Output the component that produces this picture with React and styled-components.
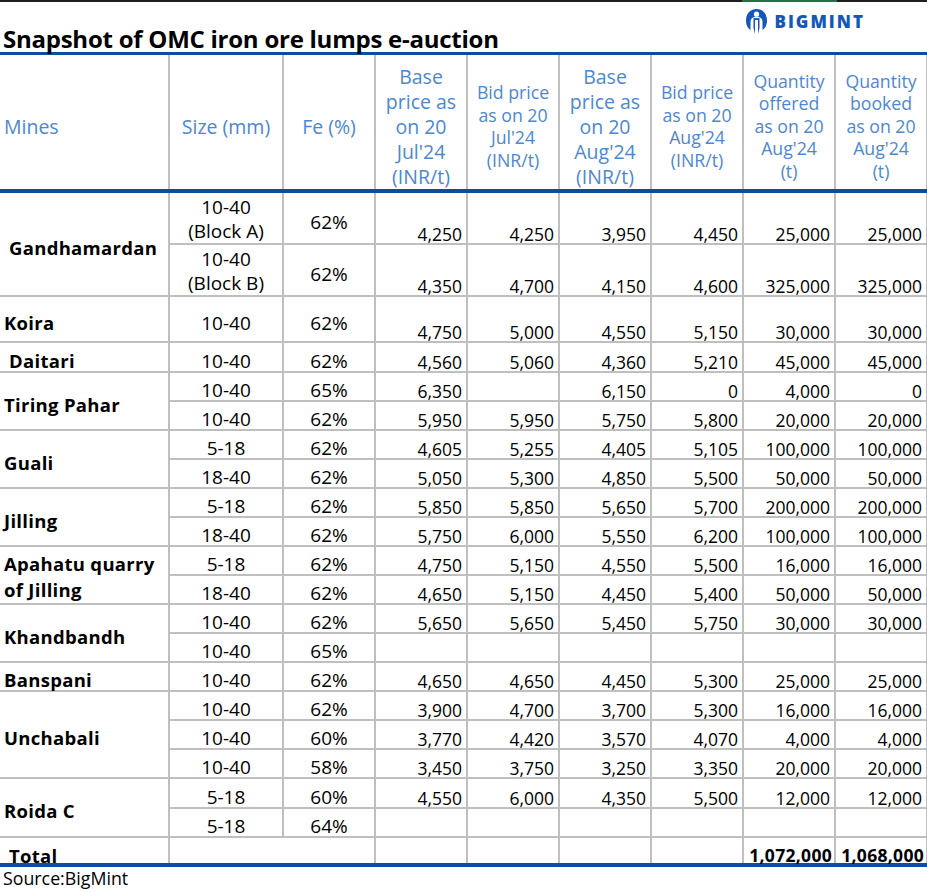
import React from 'react';
import styled, { createGlobalStyle } from 'styled-components';

const BLUE = '#0d4c9e';
const GRID = '#bfbfbf';
const HEAD = '#4d87d1';

const GlobalStyle = createGlobalStyle`
  html, body { margin: 0; padding: 0; background: #fff; }
  body { font-family: "Open Sans", "Noto Sans", sans-serif; color: #000; }
`;

const Page = styled.div`
  width: 927px;
`;

const TopRule = styled.div`
  height: 2px;
  background: linear-gradient(to right, #1f1f1f 0 742px, #217346 742px 837px, #1f1f1f 837px);
`;

const TitleBar = styled.div`
  height: 50px;
  display: flex;
  justify-content: space-between;
  align-items: flex-end;
  border-bottom: 3px solid ${BLUE};
  padding-left: 3px;
`;

const Title = styled.h1`
  margin: 0;
  font-size: 24px;
  font-weight: 700;
  line-height: 1;
  padding-bottom: 1px;
  letter-spacing: -0.25px;
`;

const Logo = styled.div`
  align-self: flex-start;
  margin-top: 6px;
  margin-right: 62px;
  display: flex;
  align-items: center;
  gap: 6px;
  color: #1557b7;
  font-weight: 800;
  font-size: 17px;
  letter-spacing: 2px;
`;

const Table = styled.table`
  width: 927px;
  border-collapse: collapse;
  table-layout: fixed;
`;

const HeadRow = styled.tr`
  height: 136px;
`;

const HeadCell = styled.th`
  font-weight: 400;
  color: ${HEAD};
  font-size: ${p => (p.$big ? '19.5px' : '17.7px')};
  line-height: ${p => (p.$big ? '25px' : '22.5px')};
  text-align: ${p => (p.$left ? 'left' : 'center')};
  vertical-align: middle;
  border: 2px solid ${GRID};
  border-top: none;
  border-bottom: 4px solid ${BLUE};
  padding: 8px ${p => (p.$left ? '4px' : '1px')} 0;
  white-space: nowrap;
  &:first-child { border-left: none; }
`;

const Row = styled.tr`
  height: ${p => p.$h}px;
`;

const Cell = styled.td`
  border: 2px solid ${GRID};
  font-size: 17.5px;
  line-height: 18px;
  padding: 0 4px;
  white-space: nowrap;
`;

const MineCell = styled(Cell)`
  border-left: none;
  font-weight: 700;
  font-size: 18.5px;
  letter-spacing: 0.3px;
  text-align: left;
  vertical-align: middle;
  white-space: normal;
  padding: ${p => (p.$multi ? 4 : 7)}px 0 0 ${p => (p.$indent ? '9px' : '4px')};
  line-height: ${p => (p.$multi ? 26 : 20)}px;
`;

const CenterCell = styled(Cell)`
  text-align: center;
  vertical-align: middle;
  font-size: 19px;
  line-height: ${p => (p.$multi ? 24 : 20)}px;
  padding-top: ${p => (p.$multi ? 2 : 7)}px;
`;

const NumCell = styled(Cell)`
  text-align: right;
  vertical-align: bottom;
  padding-bottom: 0;
`;

const TotalRow = styled.tr`
  height: 28px;
  & > td {
    border-bottom: 4px solid ${BLUE};
    vertical-align: bottom;
    line-height: 15px;
    padding-bottom: 0;
  }
`;

const TotalLabel = styled(Cell)`
  border-left: none;
  font-weight: 700;
  font-size: 18.5px;
  letter-spacing: 0.3px;
  padding-left: 9px;
  border-top-color: #d9d9d9;
`;

const TotalNum = styled(NumCell)`
  font-weight: 700;
  padding-right: 2px;
  letter-spacing: 0.3px;
`;

const Source = styled.div`
  font-size: 17.8px;
  padding: 0 0 0 3px;
  line-height: 22px;
`;

const LogoMark = () => (
  <svg width="23" height="27" viewBox="0 0 23 27" aria-hidden="true">
    <path
      d="M11.5 1 C5 1 1 6 1 12.5 C1 17 3 20.5 5.5 22 L5.5 14 C5.5 11 7 9.5 8.5 9.5 L8.5 20 L10 26 L10 12 L13 12 L13 26 L14.5 20 L14.5 9.5 C16 9.5 17.5 11 17.5 14 L17.5 22 C20 20.5 22 17 22 12.5 C22 6 18 1 11.5 1 Z"
      fill="#1557b7"
    />
    <circle cx="11.5" cy="6.2" r="2.6" fill="#fff" />
    <path d="M8.5 9.5 L14.5 9.5" stroke="#fff" strokeWidth="1.2" />
  </svg>
);

const ROWS = [
  { mine: 'Gandhamardan', indent: true, h: [52, 52], items: [
    { size: ['10-40', '(Block A)'], fe: '62%', v: ['4,250', '4,250', '3,950', '4,450', '25,000', '25,000'] },
    { size: ['10-40', '(Block B)'], fe: '62%', v: ['4,350', '4,700', '4,150', '4,600', '325,000', '325,000'] },
  ] },
  { mine: 'Koira', h: [46], items: [
    { size: ['10-40'], fe: '62%', v: ['4,750', '5,000', '4,550', '5,150', '30,000', '30,000'] },
  ] },
  { mine: 'Daitari', indent: true, h: [30], items: [
    { size: ['10-40'], fe: '62%', v: ['4,560', '5,060', '4,360', '5,210', '45,000', '45,000'] },
  ] },
  { mine: 'Tiring Pahar', h: [29, 29], items: [
    { size: ['10-40'], fe: '65%', v: ['6,350', '', '6,150', '0', '4,000', '0'] },
    { size: ['10-40'], fe: '62%', v: ['5,950', '5,950', '5,750', '5,800', '20,000', '20,000'] },
  ] },
  { mine: 'Guali', h: [29, 29], items: [
    { size: ['5-18'], fe: '62%', v: ['4,605', '5,255', '4,405', '5,105', '100,000', '100,000'] },
    { size: ['18-40'], fe: '62%', v: ['5,050', '5,300', '4,850', '5,500', '50,000', '50,000'] },
  ] },
  { mine: 'Jilling', h: [29, 29], items: [
    { size: ['5-18'], fe: '62%', v: ['5,850', '5,850', '5,650', '5,700', '200,000', '200,000'] },
    { size: ['18-40'], fe: '62%', v: ['5,750', '6,000', '5,550', '6,200', '100,000', '100,000'] },
  ] },
  { mine: 'Apahatu quarry of Jilling', lines: ['Apahatu quarry', 'of Jilling'], h: [29, 29], items: [
    { size: ['5-18'], fe: '62%', v: ['4,750', '5,150', '4,550', '5,500', '16,000', '16,000'] },
    { size: ['18-40'], fe: '62%', v: ['4,650', '5,150', '4,450', '5,400', '50,000', '50,000'] },
  ] },
  { mine: 'Khandbandh', h: [29, 29], items: [
    { size: ['10-40'], fe: '62%', v: ['5,650', '5,650', '5,450', '5,750', '30,000', '30,000'] },
    { size: ['10-40'], fe: '65%', v: ['', '', '', '', '', ''] },
  ] },
  { mine: 'Banspani', h: [29], items: [
    { size: ['10-40'], fe: '62%', v: ['4,650', '4,650', '4,450', '5,300', '25,000', '25,000'] },
  ] },
  { mine: 'Unchabali', h: [29, 29, 29], items: [
    { size: ['10-40'], fe: '62%', v: ['3,900', '4,700', '3,700', '5,300', '16,000', '16,000'] },
    { size: ['10-40'], fe: '60%', v: ['3,770', '4,420', '3,570', '4,070', '4,000', '4,000'] },
    { size: ['10-40'], fe: '58%', v: ['3,450', '3,750', '3,250', '3,350', '20,000', '20,000'] },
  ] },
  { mine: 'Roida C', h: [30, 29], items: [
    { size: ['5-18'], fe: '60%', v: ['4,550', '6,000', '4,350', '5,500', '12,000', '12,000'] },
    { size: ['5-18'], fe: '64%', v: ['', '', '', '', '', ''] },
  ] },
];

const HEADERS = [
  { text: ['Base', 'price as', 'on 20', "Jul'24", '(INR/t)'], big: true },
  { text: ['Bid price', 'as on 20', "Jul'24", '(INR/t)'] },
  { text: ['Base', 'price as', 'on 20', "Aug'24", '(INR/t)'], big: true },
  { text: ['Bid price', 'as on 20', "Aug'24", '(INR/t)'] },
  { text: ['Quantity', 'offered', 'as on 20', "Aug'24", '(t)'] },
  { text: ['Quantity', 'booked', 'as on 20', "Aug'24", '(t)'] },
];

const Lines = ({ lines }) =>
  lines.map((l, i) => (
    <React.Fragment key={i}>
      {i > 0 && <br />}
      {l}
    </React.Fragment>
  ));

export default function App() {
  return (
    <Page>
      <GlobalStyle />
      <TopRule />
      <TitleBar>
        <Title>Snapshot of OMC iron ore lumps e-auction</Title>
        <Logo>
          <LogoMark />
          <span>BIGMINT</span>
        </Logo>
      </TitleBar>
      <Table>
        <colgroup>
          <col style={{ width: 169 }} />
          <col style={{ width: 114 }} />
          <col style={{ width: 92 }} />
          <col style={{ width: 92 }} />
          <col style={{ width: 92 }} />
          <col style={{ width: 92 }} />
          <col style={{ width: 92 }} />
          <col style={{ width: 92 }} />
          <col style={{ width: 92 }} />
        </colgroup>
        <thead>
          <HeadRow>
            <HeadCell $left $big>Mines</HeadCell>
            <HeadCell $big>Size (mm)</HeadCell>
            <HeadCell $big>Fe (%)</HeadCell>
            {HEADERS.map((h, i) => (
              <HeadCell key={i} $big={h.big}>
                <Lines lines={h.text} />
              </HeadCell>
            ))}
          </HeadRow>
        </thead>
        <tbody>
          {ROWS.map(group =>
            group.items.map((it, j) => (
              <Row key={group.mine + j} $h={group.h[j]}>
                {j === 0 && (
                  <MineCell
                    rowSpan={group.items.length}
                    $indent={group.indent}
                    $multi={!!group.lines}
                  >
                    {group.lines ? <Lines lines={group.lines} /> : group.mine}
                  </MineCell>
                )}
                <CenterCell $multi={it.size.length > 1}>
                  <Lines lines={it.size} />
                </CenterCell>
                <CenterCell>{it.fe}</CenterCell>
                {it.v.map((v, k) => (
                  <NumCell key={k}>{v}</NumCell>
                ))}
              </Row>
            ))
          )}
          <TotalRow>
            <TotalLabel>Total</TotalLabel>
            <Cell colSpan={2} />
            <Cell />
            <Cell />
            <Cell />
            <Cell />
            <TotalNum>1,072,000</TotalNum>
            <TotalNum>1,068,000</TotalNum>
          </TotalRow>
        </tbody>
      </Table>
      <Source>Source:BigMint</Source>
    </Page>
  );
}
